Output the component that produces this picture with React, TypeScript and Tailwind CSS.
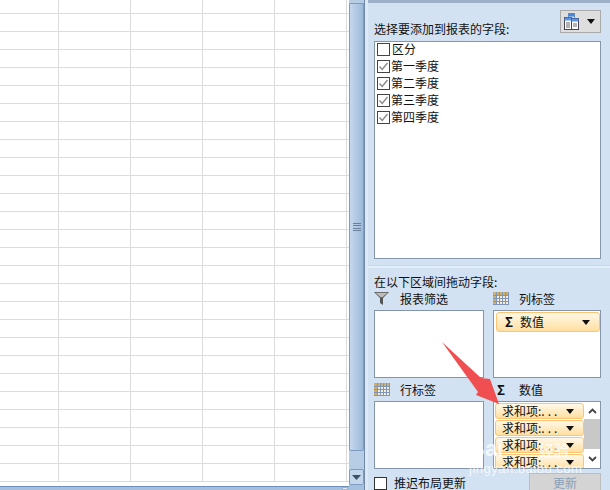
import React from "react";

const Tri = () => (
  <svg width="8" height="5" viewBox="0 0 8 5" className="shrink-0">
    <path d="M0 0h8L4 5z" fill="#111" />
  </svg>
);

const GridIcon = () => (
  <svg width="16" height="13" viewBox="0 0 16 13" className="shrink-0">
    <rect x="0" y="0" width="16" height="13" fill="#f6efdc" />
    <rect x="0" y="0" width="16" height="3" fill="#cdb070" />
    <rect x="0" y="0" width="3" height="13" fill="#cdb070" />
    <path d="M0 3.500h16M0 6.500h16M0 9.500h16M0 12.500h16M3.500 0v13M6.500 0v13M9.500 0v13M12.500 0v13M15.500 0v13" stroke="#7f95b8" strokeWidth="1" />
  </svg>
);

const Funnel = () => (
  <svg width="15" height="13" viewBox="0 0 15 13" className="shrink-0">
    <path d="M0 0h15L9 6v7L6 11V6z" fill="#555" />
    <path d="M1.500 0.700h12L8.500 5.300h-2z" fill="#bbb" />
  </svg>
);

const Check = ({ checked }: { checked: boolean }) => (
  <span className="w-[13px] h-[13px] border border-[#444] bg-white flex items-center justify-center shrink-0">
    {checked && (
      <svg width="11" height="11" viewBox="0 0 11 11">
        <path d="M1.500 5.500 4.200 8.500 9.500 2" fill="none" stroke="#8a8a8a" strokeWidth="1.400" />
      </svg>
    )}
  </span>
);

const Field = ({ label, checked }: { label: string; checked: boolean }) => (
  <div className="h-[17px] flex items-center gap-[1px] pl-[2px]">
    <Check checked={checked} />
    <span className={checked ? "pb-[2px]" : "pl-[1px] pb-[2px]"}>{label}</span>
  </div>
);

const Chip = () => (
  <div className="w-[89px] h-[16px] shrink-0 rounded-[3px] border border-[#fdc474] bg-gradient-to-b from-[#fff8e8] to-[#ffdf9f] flex items-center justify-between pl-[6px] pr-[9px]">
    <span>求和项:<span className="tracking-[3px]">...</span></span>
    <Tri />
  </div>
);

const rows = Array.from({ length: 27 }, (_, i) => i);
const cols = ["w-[59px]", "w-[72px]", "w-[72px]", "w-[72px]", "w-[72px]"];

export default function App() {
  return (
    <div
      className="relative w-[610px] h-[490px] overflow-hidden flex text-[12px] leading-[14px] text-[#111] bg-white"
      style={{ fontFamily: '"Noto Sans CJK SC", "Liberation Sans", sans-serif' }}
    >
      {/* sheet */}
      <div className="relative w-[349px] h-full flex flex-col shrink-0">
        <div className="flex-1 overflow-hidden">
          {rows.map((r) => (
            <div key={r} className={`flex border-b border-[#dcdcdc] ${r === 0 ? "h-[14px]" : "h-[18px]"}`}>
              {cols.map((c, i) => (
                <div key={i} className={`${c} border-r border-[#dcdcdc] shrink-0`} />
              ))}
            </div>
          ))}
        </div>
        <div className="h-[4px] bg-[#a5bfdf] border-t border-[#6d8fb8] shrink-0" />
        <div className="absolute left-[342px] top-[487px] w-[6px] h-[3px] bg-[#e4ecf5] border border-[#9fb3cc]" />
      </div>

      {/* scrollbar */}
      <div className="w-[16px] h-full bg-[#b7cde6] flex flex-col shrink-0 border-r border-[#6f88aa]">
        <div className="h-[3px] shrink-0" />
        <div className="h-[448px] w-full shrink-0 border border-[#7f9cc0] rounded-b-[2px] bg-gradient-to-r from-[#c5d8ee] to-[#9db9d9] flex flex-col items-center justify-center">
          <div className="w-[8px] h-[8px] flex flex-col justify-between">
            <div className="h-px bg-[#6b7f99]" />
            <div className="h-px bg-[#6b7f99]" />
            <div className="h-px bg-[#6b7f99]" />
            <div className="h-px bg-[#6b7f99]" />
          </div>
        </div>
        <div className="mt-[18px] h-[16px] w-full shrink-0 border border-[#7f9cc0] rounded-[2px] bg-[#c2d6ec] flex items-center justify-center">
          <svg width="9" height="5" viewBox="0 0 9 5"><path d="M0 0h9L4.500 5z" fill="#3d4f66" /></svg>
        </div>
        <div className="flex-1 bg-[#a5bfdf]" />
      </div>

      {/* pane */}
      <div className="flex-1 h-full bg-[#d2e2f2] flex flex-col border-l-[3px] border-[#dde9f5]">
        <div className="h-[3px] bg-[#9db0c8] shrink-0" />
        <div className="pl-[6px] pr-[9px] flex items-end justify-between mt-[7px]">
          <span className="mb-[-3px]">选择要添加到报表的字段:</span>
          <div className="w-[41px] h-[23px] bg-[#dedede] border border-[#aaa] flex items-center justify-between pl-[3px] pr-[5px]">
            <svg width="15" height="17" viewBox="0 0 15 17">
              <rect x="4.500" y="0.500" width="6" height="12" fill="#cfe0f5" stroke="#6a8cc0" />
              <rect x="4.500" y="0.500" width="6" height="3" fill="#4a84d8" />
              <rect x="0.500" y="4.500" width="7" height="12" fill="#fff" stroke="#445" />
              <rect x="0.500" y="4.500" width="7" height="3" fill="#5a94e4" />
              <rect x="7.500" y="5.500" width="7" height="11" fill="#fff" stroke="#445" />
              <rect x="7.500" y="5.500" width="7" height="3" fill="#5a94e4" />
              <path d="M2 10h4M2 12h4M2 14h4M9 11h4M9 13h4" stroke="#666" />
            </svg>
            <Tri />
          </div>
        </div>

        <div className="ml-[6px] mr-[9px] mt-[8px] h-[218px] bg-white border border-[#8496ab] shrink-0">
          <div className="-mt-[1px]">
            <Field label="区分" checked={false} />
            <Field label="第一季度" checked />
            <Field label="第二季度" checked />
            <Field label="第三季度" checked />
            <Field label="第四季度" checked />
          </div>
        </div>

        <div className="mt-[6px] h-[4px] bg-gradient-to-b from-[#b9d0ea] via-[#eef5fc] to-[#c5d9ee] shrink-0" />

        <div className="pl-[6px] mt-[6px] h-[14px] shrink-0">在以下区域间拖动字段:</div>

        <div className="pl-[6px] pr-[9px] grid grid-cols-[110px_108px] gap-x-[9px] mt-[1px]">
          <div className="h-[20px] pb-[3px] flex items-center gap-[11px]">
            <Funnel />
            <span>报表筛选</span>
          </div>
          <div className="h-[20px] pb-[3px] flex items-center gap-[10px]">
            <GridIcon />
            <span>列标签</span>
          </div>
          <div className="h-[68px] bg-white border border-[#8496ab]" />
          <div className="h-[68px] bg-white border border-[#8496ab] pl-[2px] pt-[1px]">
            <div className="h-[20px] rounded-[3px] border border-[#fdc474] bg-gradient-to-b from-[#fff8e8] to-[#ffdf9f] flex items-center justify-between pl-[8px] pr-[9px]">
              <span className="flex items-center gap-[7px]">
                <b className="text-[13px]">Σ</b>
                <span>数值</span>
              </span>
              <Tri />
            </div>
          </div>

          <div className="h-[23px] flex items-center gap-[10px]">
            <GridIcon />
            <span>行标签</span>
          </div>
          <div className="h-[23px] flex items-center gap-[14px]">
            <b className="text-[13px] pl-[4px]">Σ</b>
            <span>数值</span>
          </div>
          <div className="h-[68px] bg-white border border-[#8496ab]" />
          <div className="h-[68px] bg-white border border-[#8496ab] flex overflow-hidden">
            <div className="flex flex-col gap-[1px] pl-[1px] pt-[1px] overflow-hidden">
              <Chip />
              <Chip />
              <Chip />
              <Chip />
            </div>
            <div className="w-[16px] flex flex-col items-center">
              <div className="h-[17px] shrink-0 flex items-center justify-center">
                <svg width="9" height="6" viewBox="0 0 9 6"><path d="M1 5l3.500-3.500L8 5" fill="none" stroke="#444" strokeWidth="1.800" /></svg>
              </div>
              <div className="w-full h-[30px] shrink-0 bg-[#c8c8c8]" />
              <div className="h-[19px] shrink-0 flex items-center justify-center">
                <svg width="9" height="6" viewBox="0 0 9 6"><path d="M1 1l3.500 3.500L8 1" fill="none" stroke="#444" strokeWidth="1.800" /></svg>
              </div>
            </div>
          </div>
        </div>

        <div className="pl-[6px] pr-[9px] flex justify-between items-start mt-[4px]">
          <div className="flex items-center gap-[7px] mt-[3px]">
            <span className="w-[13px] h-[13px] bg-white border border-[#333]" />
            <span>推迟布局更新</span>
          </div>
          <div className="w-[72px] h-[20px] bg-[#d4d4d4] border border-[#bdbdbd] text-[#8aa0b8] flex items-center justify-center">更新</div>
        </div>
      </div>

      {/* arrow annotation */}
      <svg className="absolute left-[440px] top-[340px]" width="70" height="70" viewBox="0 0 70 70">
        <path d="M2 2 L41 38 L50 39 L59 64 L36 55 L38 52 Z" fill="#ef4f50" />
      </svg>

      {/* watermark */}
      <div className="absolute left-[469px] top-[439px] text-white/75 leading-none pointer-events-none" style={{ fontFamily: '"Liberation Sans", sans-serif' }}>
        <div className="flex items-center h-[20px]">
          <span className="text-[22px] font-bold w-[70px]">Bai</span>
          <span className="text-[15px] font-bold" style={{ fontFamily: '"Noto Sans CJK SC", sans-serif' }}>经验</span>
        </div>
        <div className="text-[13px] tracking-[0.5px] mt-[3px]">jingyan.baidu.com</div>
      </div>
    </div>
  );
}
